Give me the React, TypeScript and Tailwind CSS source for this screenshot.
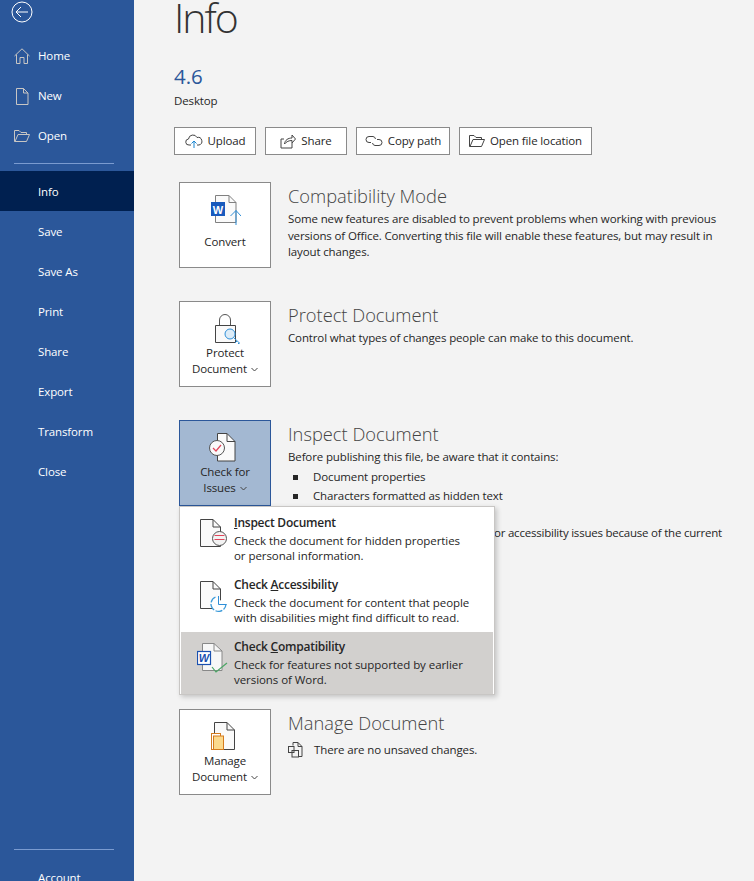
import React from 'react';

const Chevron = () => (
  <svg width="7" height="5" viewBox="0 0 7 5" className="inline-block ml-1 align-middle" fill="none" stroke="#444" strokeWidth="1">
    <path d="M0.5 1l3 3 3-3" />
  </svg>
);

// Sidebar icons
const HomeIcon = () => (
  <svg width="16" height="16" viewBox="0 0 16 16" fill="none" stroke="#c8c6c4" strokeWidth="1">
    <path d="M0.5 8L8 0.8 15.5 8M2.5 6.5V15.5H6V9.5H10V15.5H13.5V6.5" />
  </svg>
);
const NewIcon = () => (
  <svg width="16" height="17" viewBox="0 0 16 17" fill="none" stroke="#c8c6c4" strokeWidth="1">
    <path d="M2.5 0.5H9.5L14 5V16.5H2.5ZM9.5 0.5V5H14" />
  </svg>
);
const OpenIcon = ({ color = '#c8c6c4' }: { color?: string }) => (
  <svg width="16" height="12" viewBox="0 0 16 12" fill="none" stroke={color} strokeWidth="1">
    <path d="M0.5 11.5V0.5H5L7 2.5H12.5V4.5M0.5 11.5H12.5L15.5 4.5H4L1 11.5" />
  </svg>
);

const UploadIcon = () => (
  <svg width="18" height="16" viewBox="0 0 18 16" fill="none" strokeWidth="1">
    <path d="M6 12H4a3 3 0 0 1-.5-6A4.5 4.5 0 0 1 12 4.5a3.5 3.5 0 0 1 2 7.5H12" stroke="#444" />
    <path d="M9 15V8M6.5 10.5L9 8l2.5 2.5" stroke="#1a86d0" />
  </svg>
);
const ShareIcon = () => (
  <svg width="16" height="16" viewBox="0 0 16 16" fill="none" stroke="#444" strokeWidth="1">
    <path d="M4 6H1V15H12V10M4.5 11C5 7 8 5 12 5V2L15.5 6 12 10V7.5C9 7.5 6.5 8.5 4.5 11Z" />
  </svg>
);
const LinkIcon = () => (
  <svg width="18" height="12" viewBox="0 0 18 12" fill="none" stroke="#444" strokeWidth="1">
    <path d="M6 7.5H4A3 3 0 0 1 4 1.5H8A3 3 0 0 1 10.5 4" />
    <path d="M12 4.5H14A3 3 0 0 1 14 10.5H10A3 3 0 0 1 7.5 8" />
  </svg>
);

// Big button icons
const ConvertIcon = () => (
  <svg width="30" height="30" viewBox="0 0 30 30" fill="none" className="ml-[2px]">
    <path d="M4.5 0.5H18L25 7.5V27.5H4.5Z" fill="#fafafa" stroke="#808080" />
    <path d="M18 0.5V7.5H25" stroke="#808080" />
    <rect x="0" y="7" width="14" height="14" fill="#185abd" />
    <text x="7" y="18.5" textAnchor="middle" fill="#fff" fontSize="11" fontWeight="700" fontFamily="Liberation Sans, sans-serif">W</text>
    <path d="M25 30V15.5M19.5 21L25 15.5L30 21" stroke="#2f8fd8" strokeWidth="1" />
  </svg>
);
const LockIcon = () => (
  <svg width="26" height="30" viewBox="0 0 26 30" fill="none" className="ml-[6px]">
    <path d="M4.5 11V6A5.5 5.5 0 0 1 15.5 6V11" stroke="#555" />
    <path d="M0.5 11.5H20.5V28.5H0.5Z" fill="#fafafa" stroke="#444" />
    <circle cx="15" cy="20" r="5" fill="#dcecf8" stroke="#2f8fd8" />
    <path d="M18.5 23.5L25 29.5M22 27L20 29M24 29L23 30" stroke="#2f8fd8" />
  </svg>
);
const CheckIssuesIcon = () => (
  <svg width="28" height="29" viewBox="0 0 28 29" fill="none" className="-ml-[6px]">
    <path d="M9.5 0.5H19L27 8.5V28H9.5Z" fill="#fafafa" stroke="#444" />
    <path d="M19 0.5V8.5H27" stroke="#444" />
    <circle cx="9" cy="15" r="7.5" fill="#fafafa" stroke="#555" />
    <path d="M5 15L8 18L13 12" stroke="#e0455a" strokeWidth="1.2" />
  </svg>
);
const ManageIcon = () => (
  <svg width="24" height="28" viewBox="0 0 24 28" fill="none" className="-ml-[4px]">
    <path d="M3.5 0.5H16L23.5 8V27.5H3.5Z" fill="#fafafa" stroke="#444" />
    <path d="M16 0.5V8H23.5" stroke="#444" />
    <rect x="0.5" y="11.5" width="9" height="16" fill="#fff" stroke="#d47b1e" />
    <rect x="2.5" y="14" width="10" height="13.5" fill="#fbd98c" stroke="#d47b1e" />
  </svg>
);
const VersionsIcon = () => (
  <svg width="15" height="16" viewBox="0 0 15 16" fill="none" stroke="#444" strokeWidth="1">
    <path d="M5 3.5V0.5H10L14 4.5V14.5H10.5" />
    <path d="M10 0.5V4.5H14" />
    <rect x="0.5" y="4.5" width="5.5" height="6" />
    <rect x="4" y="8.5" width="6.5" height="6.5" />
  </svg>
);

// Dropdown menu icons
const InspectMenuIcon = () => (
  <svg width="28" height="28" viewBox="0 0 28 28" fill="none">
    <path d="M0.5 0.5H13L20.5 8V27.5H0.5Z" fill="#fafafa" stroke="#444" />
    <path d="M13 0.5V8H20.5" stroke="#444" />
    <circle cx="19.5" cy="19.5" r="7" fill="#f3f3f3" stroke="#555" />
    <path d="M14.5 16.5H24.5M14.5 20.5H24.5" stroke="#e0455a" />
  </svg>
);
const AccessibilityMenuIcon = () => (
  <svg width="28" height="32" viewBox="0 0 28 32" fill="none">
    <path d="M0.5 0.5H13L20.5 8V27.5H0.5Z" fill="#fafafa" stroke="#444" />
    <path d="M13 0.5V8H20.5" stroke="#444" />
    <path d="M15.5 16A7.5 7.5 0 1 0 26 23" fill="#fff" stroke="#3b9ad9" strokeWidth="1.3" strokeDasharray="7 1.5" />
    <path d="M18.5 15V23.5H26.5" stroke="#2f8fd8" />
  </svg>
);
const CompatMenuIcon = () => (
  <svg width="31" height="30" viewBox="0 0 31 30" fill="none">
    <path d="M5.5 0.5H17L25 8V27.5H5.5Z" fill="#f7f7f7" stroke="#888" />
    <path d="M17 0.5V8H25" stroke="#888" />
    <rect x="0.5" y="8.5" width="13" height="13" fill="#fff" stroke="#1a50b0" strokeWidth="1.2" />
    <text x="7" y="18.5" textAnchor="middle" fill="#1a50b0" fontSize="11" fontWeight="700" fontStyle="italic" fontFamily="Liberation Sans, sans-serif">W</text>
    <path d="M15 24L19 29L30 20" stroke="#4aa564" strokeWidth="1.2" />
  </svg>
);

const NavItem = ({ label, icon, active }: { label: string; icon?: React.ReactNode; active?: boolean }) => (
  <div className={`relative h-10 shrink-0 flex items-center pl-[38px] text-[11.5px] tracking-[-0.13px] text-white ${icon ? '' : 'pt-px'} ${active ? 'bg-[#002050]' : ''}`}>
    {icon && <span className="absolute left-[14px] top-0 h-10 flex items-center">{icon}</span>}
    {label}
  </div>
);

const Section = ({
  button,
  title,
  children,
  active,
  icon,
  className = '',
}: {
  button: React.ReactNode;
  title: string;
  children: React.ReactNode;
  active?: boolean;
  icon: React.ReactNode;
  className?: string;
}) => (
  <div className={`flex h-[86px] ${className}`}>
    <div
      className={`w-[92px] h-[86px] shrink-0 flex flex-col items-center pt-[12px] pb-[6px] text-[11.5px] tracking-[-0.13px] leading-[16px] text-center border ${
        active ? 'bg-[#a3b8d2] border-[#2b579a]' : 'bg-white border-[#8a8a8a]'
      }`}
    >
      <div className="h-[28px] flex items-start justify-center">{icon}</div>
      <div className="flex-1 flex items-center text-[#262626]">
        <div>{button}</div>
      </div>
    </div>
    <div className="ml-[17px] min-w-0">
      <div className="text-[18.3px] leading-[24px] mt-[2px] text-[#444] font-light">{title}</div>
      <div className="text-[11.5px] tracking-[-0.13px] leading-[16.5px] text-[#262626] mt-[3px]">{children}</div>
    </div>
  </div>
);

const TopButton = ({ icon, label, width }: { icon: React.ReactNode; label: string; width: string }) => (
  <div className={`h-[28px] ${width} flex items-center justify-center gap-[5px] bg-white border border-[#8a8a8a] text-[11.5px] tracking-[-0.13px] text-[#262626]`}>
    {icon}
    {label}
  </div>
);

const MenuItem = ({
  icon,
  title,
  line1,
  line2,
  active,
}: {
  icon: React.ReactNode;
  title: React.ReactNode;
  line1: string;
  line2: string;
  active?: boolean;
}) => (
  <div className={`h-[62px] flex pl-[19px] pt-[7px] ${active ? 'bg-[#d2d0ce]' : ''}`}>
    <div className={`w-[34px] shrink-0 mt-[4px] ${active ? '-ml-[3px] w-[37px]' : ''}`}>{icon}</div>
    <div className="text-[11.5px] tracking-[-0.06px] leading-[15.25px] text-[#262626] whitespace-nowrap">
      <div className="text-[12px] tracking-[-0.25px] font-semibold mb-[2.5px]">{title}</div>
      <div>{line1}</div>
      <div>{line2}</div>
    </div>
  </div>
);

export default function App() {
  return (
    <div className="relative w-[754px] h-[881px] overflow-hidden flex bg-[#f3f3f3] font-['Open_Sans',sans-serif]">
      <aside className="w-[134px] shrink-0 bg-[#2b579a] flex flex-col overflow-hidden">
        <div className="h-9 shrink-0 pl-[11px] pt-[1px]">
          <svg width="22" height="22" viewBox="0 0 22 22" fill="none" stroke="#fff" strokeWidth="1">
            <circle cx="11" cy="11" r="10" />
            <path d="M17 11H5M10 6L5 11L10 16" />
          </svg>
        </div>
        <NavItem label="Home" icon={<HomeIcon />} />
        <NavItem label="New" icon={<NewIcon />} />
        <NavItem label="Open" icon={<OpenIcon />} />
        <div className="h-[15px] shrink-0 flex items-center pl-[14px] pr-[20px]">
          <div className="h-px w-full bg-[#7a9bd0]" />
        </div>
        <NavItem label="Info" active />
        <NavItem label="Save" />
        <NavItem label="Save As" />
        <NavItem label="Print" />
        <NavItem label="Share" />
        <NavItem label="Export" />
        <NavItem label="Transform" />
        <NavItem label="Close" />
        <div className="mt-[358px] h-px shrink-0 ml-[14px] mr-[20px] bg-[#7a9bd0]" />
        <div className="mt-[7px] shrink-0">
          <NavItem label="Account" />
        </div>
      </aside>

      <main className="flex-1 min-w-0 pl-[40px] whitespace-nowrap">
        <h1 className="text-[41px] tracking-[-2px] leading-[34px] font-light text-[#333]">Info</h1>
        <div className="mt-[30px] text-[20.5px] leading-[24px] text-[#2b579a]">4.6</div>
        <div className="mt-[5px] text-[11.5px] tracking-[-0.13px] leading-[16px] text-[#262626]">Desktop</div>
        <div className="mt-[18px] flex gap-[9px]">
          <TopButton icon={<UploadIcon />} label="Upload" width="w-[82px]" />
          <TopButton icon={<ShareIcon />} label="Share" width="w-[82px]" />
          <TopButton icon={<LinkIcon />} label="Copy path" width="w-[94px]" />
          <TopButton icon={<OpenIcon color="#444" />} label="Open file location" width="w-[133px]" />
        </div>

        <div className="mt-[27px] ml-[5px]">
          <Section button="Convert" title="Compatibility Mode" icon={<ConvertIcon />}>
            <div>Some new features are disabled to prevent problems when working with previous</div>
            <div>versions of Office. Converting this file will enable these features, but may result in</div>
            <div>layout changes.</div>
          </Section>
          <Section
            className="mt-[33px]"
            button={
              <>
                Protect
                <br />
                Document
                <Chevron />
              </>
            }
            title="Protect Document"
            icon={<LockIcon />}
          >
            Control what types of changes people can make to this document.
          </Section>
          <Section
            className="mt-[33px]"
            active
            button={
              <>
                Check for
                <br />
                Issues
                <Chevron />
              </>
            }
            title="Inspect Document"
            icon={<CheckIssuesIcon />}
          >
            <div>Before publishing this file, be aware that it contains:</div>
            <ul className="mt-[2px]">
              <li className="flex items-center h-[19px]">
                <span className="w-[5px] h-[5px] bg-[#262626] ml-[5px] mr-[15px]" />
                Document properties
              </li>
              <li className="flex items-center h-[19px]">
                <span className="w-[5px] h-[5px] bg-[#262626] ml-[5px] mr-[15px]" />
                Characters formatted as hidden text
              </li>
            </ul>
            <div className="mt-[19px] ml-[206px] tracking-[-0.22px]">or accessibility issues because of the current</div>
          </Section>
          <Section
            className="mt-[203px]"
            button={
              <>
                Manage
                <br />
                Document
                <Chevron />
              </>
            }
            title="Manage Document"
            icon={<ManageIcon />}
          >
            <div className="flex items-center gap-[11px] mt-[7px]">
              <VersionsIcon />
              There are no unsaved changes.
            </div>
          </Section>
        </div>
      </main>

      <div className="absolute left-[179px] top-[506px] w-[316px] h-[189px] bg-white border border-[#c8c6c4] shadow-[2px_2px_5px_rgba(0,0,0,0.2)] p-px whitespace-nowrap">
        <MenuItem
          icon={<InspectMenuIcon />}
          title={
            <>
              <span className="underline">I</span>nspect Document
            </>
          }
          line1="Check the document for hidden properties"
          line2="or personal information."
        />
        <MenuItem
          icon={<AccessibilityMenuIcon />}
          title={
            <>
              Check <span className="underline">A</span>ccessibility
            </>
          }
          line1="Check the document for content that people"
          line2="with disabilities might find difficult to read."
        />
        <MenuItem
          active
          icon={<CompatMenuIcon />}
          title={
            <>
              Check <span className="underline">C</span>ompatibility
            </>
          }
          line1="Check for features not supported by earlier"
          line2="versions of Word."
        />
      </div>
    </div>
  );
}
